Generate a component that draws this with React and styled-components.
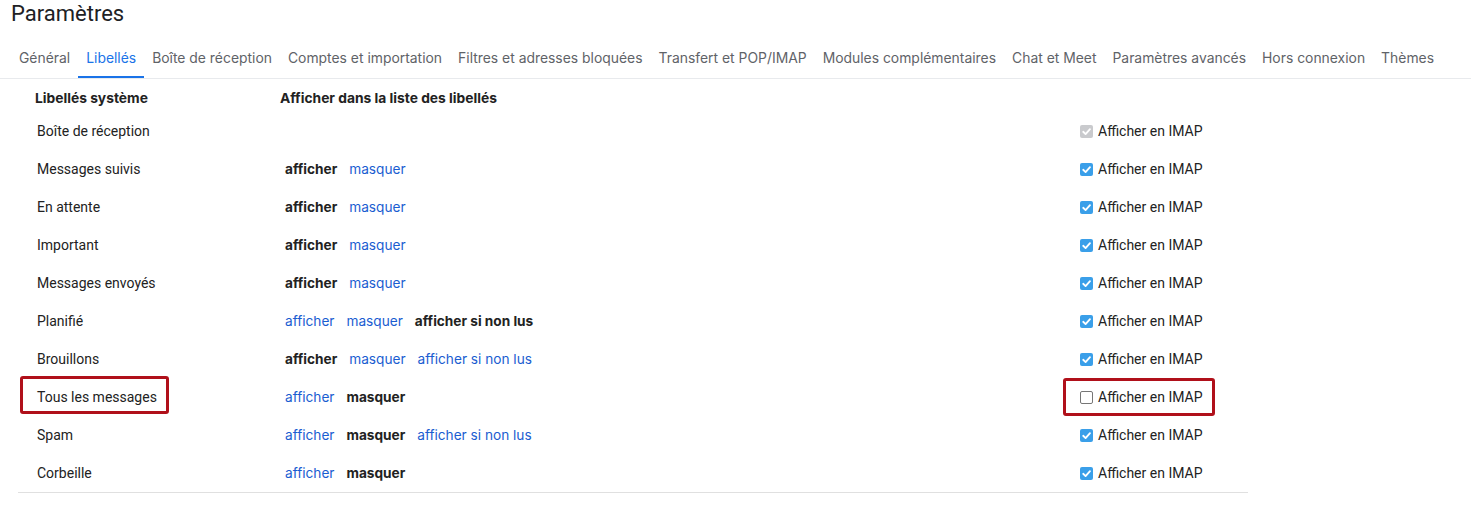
import React from "react";
import styled, { createGlobalStyle, css } from "styled-components";

const GlobalStyle = createGlobalStyle`
  html, body {
    margin: 0;
    padding: 0;
    background: #fff;
  }
  body {
    font-family: Roboto, "Noto Sans", Arial, sans-serif;
    color: #222;
  }
`;

const Page = styled.div`
  width: 1471px;
  min-height: 507px;
`;

const Title = styled.h1`
  margin: 0;
  padding-left: 11px;
  font-size: 22px;
  font-weight: 400;
  line-height: 28px;
  color: #202124;
`;

const TabBar = styled.nav`
  display: flex;
  margin-top: 10px;
  padding-left: 11px;
  border-bottom: 1px solid #e8eaed;
`;

const Tab = styled.div`
  box-sizing: border-box;
  height: 40px;
  padding: 3px 8px 0;
  line-height: 35px;
  font-family: Inter, Roboto, sans-serif;
  font-size: 13.9px;
  color: ${(p) => (p.$active ? "#1a73e8" : "#5f6368")};
  border-bottom: 2px solid ${(p) => (p.$active ? "#1a73e8" : "transparent")};
  white-space: nowrap;
`;

const Table = styled.div`
  margin-left: 18px;
  width: 1230px;
  display: grid;
  grid-template-columns: 246px 1fr 184px;
  border-bottom: 1px solid #e0e0e0;
  font-size: 14px;
`;

const HeadCell = styled.div`
  padding: 9px 0 4px ${(p) => p.$pad}px;
  line-height: 20px;
  font-family: Inter, Roboto, sans-serif;
  font-size: 13.8px;
  font-weight: 700;
  color: #222;
`;

const Cell = styled.div`
  position: relative;
  height: 38px;
  display: flex;
  align-items: center;
  padding-left: ${(p) => p.$pad}px;
  color: #222;

  ${(p) =>
    p.$mark &&
    css`
      &::after {
        content: "";
        position: absolute;
        left: ${p.$mark.left}px;
        top: ${p.$mark.top}px;
        width: ${p.$mark.width}px;
        height: 38px;
        box-sizing: border-box;
        border: 3px solid #b0101a;
        border-radius: 3px;
        pointer-events: none;
      }
    `}
`;

const Actions = styled.div`
  display: flex;
  gap: 12px;
  font-family: Inter, Roboto, sans-serif;
  font-size: 13.65px;
`;

const Action = styled.span`
  color: ${(p) => (p.$current ? "#222" : "#1a5dd1")};
  font-weight: ${(p) => (p.$current ? 700 : 400)};
  cursor: ${(p) => (p.$current ? "default" : "pointer")};
`;

const ImapLabel = styled.label`
  display: flex;
  align-items: center;
  gap: 5px;
`;

const Box = styled.span`
  box-sizing: border-box;
  width: 13px;
  height: 13px;
  border-radius: 2px;
  display: inline-flex;
  align-items: center;
  justify-content: center;
  background: ${(p) =>
    p.$state === "checked" ? "#3a9fe9" : p.$state === "disabled" ? "#c9cacd" : "#fff"};
  border: ${(p) => (p.$state === "off" ? "1px solid #767676" : "none")};
`;

const Check = ({ state }) => (
  <Box $state={state}>
    {state !== "off" && (
      <svg width="11" height="11" viewBox="0 0 12 12">
        <path
          d="M2.4 6.3 L5 8.8 L9.8 3.4"
          fill="none"
          stroke="#fff"
          strokeWidth="2"
          strokeLinecap="round"
          strokeLinejoin="round"
        />
      </svg>
    )}
  </Box>
);

const tabs = [
  "Général",
  "Libellés",
  "Boîte de réception",
  "Comptes et importation",
  "Filtres et adresses bloquées",
  "Transfert et POP/IMAP",
  "Modules complémentaires",
  "Chat et Meet",
  "Paramètres avancés",
  "Hors connexion",
  "Thèmes",
];

// current: which option is selected (shown bold)
const rows = [
  { name: "Boîte de réception", options: [], imap: "disabled" },
  { name: "Messages suivis", options: ["afficher", "masquer"], current: 0, imap: "checked" },
  { name: "En attente", options: ["afficher", "masquer"], current: 0, imap: "checked" },
  { name: "Important", options: ["afficher", "masquer"], current: 0, imap: "checked" },
  { name: "Messages envoyés", options: ["afficher", "masquer"], current: 0, imap: "checked" },
  { name: "Planifié", options: ["afficher", "masquer", "afficher si non lus"], current: 2, imap: "checked" },
  { name: "Brouillons", options: ["afficher", "masquer", "afficher si non lus"], current: 0, imap: "checked" },
  { name: "Tous les messages", options: ["afficher", "masquer"], current: 1, imap: "off", marked: true },
  { name: "Spam", options: ["afficher", "masquer", "afficher si non lus"], current: 1, imap: "checked" },
  { name: "Corbeille", options: ["afficher", "masquer"], current: 1, imap: "checked" },
];

const App = () => {
  return (
    <Page>
      <GlobalStyle />
      <Title>Paramètres</Title>
      <TabBar>
        {tabs.map((t) => (
          <Tab key={t} $active={t === "Libellés"}>
            {t}
          </Tab>
        ))}
      </TabBar>

      <Table>
        <HeadCell $pad={17}>Libellés système</HeadCell>
        <HeadCell $pad={16}>Afficher dans la liste des libellés</HeadCell>
        <HeadCell $pad={16}></HeadCell>

        {rows.map((r) => (
          <React.Fragment key={r.name}>
            <Cell $pad={19} $mark={r.marked ? { left: 2, top: -2, width: 149 } : null}>
              {r.name}
            </Cell>
            <Cell $pad={21}>
              <Actions>
                {r.options.map((o, i) => (
                  <Action key={o} $current={i === r.current}>
                    {o}
                  </Action>
                ))}
              </Actions>
            </Cell>
            <Cell $pad={16} $mark={r.marked ? { left: -1, top: 0, width: 152 } : null}>
              <ImapLabel>
                <Check state={r.imap} />
                Afficher en IMAP
              </ImapLabel>
            </Cell>
          </React.Fragment>
        ))}
      </Table>
    </Page>
  );
};

export default App;
